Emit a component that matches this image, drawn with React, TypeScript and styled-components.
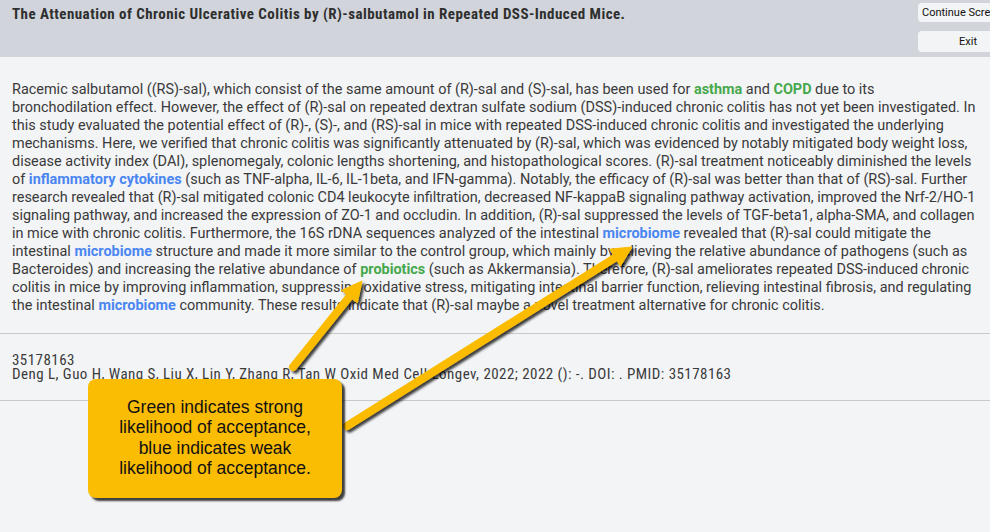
import styled, { createGlobalStyle } from "styled-components";

const GlobalStyle = createGlobalStyle`
  html, body {
    margin: 0;
    padding: 0;
    background: #f3f4f6;
    overflow: hidden;
  }
  body {
    font-family: Roboto, "Liberation Sans", sans-serif;
    color: #3a3a3a;
  }
`;

const condensed = `"Roboto Condensed", "Liberation Sans Narrow", "DejaVu Sans Condensed", Roboto, sans-serif`;

// --- HEADER ---
const Header = styled.header`
  display: grid;
  grid-template-columns: 906px 100px;
  column-gap: 12px;
  height: 57px;
  background: #d1d5db;
`;

const Title = styled.h1`
  margin: 0;
  padding: 6px 0 0 12px;
  font-family: ${condensed};
  font-size: 15px;
  letter-spacing: 0.45px;
  font-weight: 700;
  line-height: 16px;
  color: #2f2f2f;
`;

const ButtonStack = styled.div`
  display: flex;
  flex-direction: column;
  gap: 9px;
  padding-top: 3px;
`;

const HeaderButton = styled.button<{ $align?: "left" | "center" }>`
  height: 19px;
  width: 100px;
  padding: 0 4px;
  border: none;
  border-radius: 4px;
  background: #f3f4f6;
  font-family: Roboto, sans-serif;
  font-size: 11px;
  color: #111;
  white-space: nowrap;
  text-align: ${(p) => p.$align ?? "center"};
  overflow: hidden;
  &:nth-child(2) {
    height: 21px;
  }
`;

// --- ABSTRACT ---
const Abstract = styled.p`
  margin: 0;
  padding: 24px 2px 18px 12px;
  font-size: 14.45px;
  line-height: 18px;
  white-space: nowrap;
  border-bottom: 1px solid #c9c9c9;
`;

const Term = styled.span<{ $strength: "strong" | "weak" }>`
  font-weight: 700;
  color: ${(p) => (p.$strength === "strong" ? "#46a84c" : "#4a86f2")};
`;

const Citation = styled.div`
  padding: 19px 12px 19px;
  font-family: ${condensed};
  font-size: 15px;
  letter-spacing: 0.45px;
  line-height: 14px;
  color: #3a3a3a;
  border-bottom: 1px solid #c9c9c9;
`;

// --- CALLOUT OVERLAY ---
const Overlay = styled.svg`
  position: absolute;
  left: 0;
  top: 0;
  pointer-events: none;
  overflow: visible;
`;

const Callout = styled.div`
  position: absolute;
  left: 88px;
  top: 379px;
  width: 254px;
  height: 119px;
  box-sizing: border-box;
  display: flex;
  align-items: center;
  justify-content: center;
  padding: 0 4px 2px;
  background: #fbbc04;
  border-radius: 8px;
  box-shadow: 3px 3px 2px rgba(0, 0, 0, 0.75);
  font-family: "Liberation Sans", Arial, sans-serif;
  font-size: 17.5px;
  line-height: 20.5px;
  text-align: center;
  color: #111;
`;

const Page = styled.div`
  position: relative;
  width: 990px;
  height: 532px;
  overflow: hidden;
`;

type Arrow = { x1: number; y1: number; x2: number; y2: number };

const arrows: Arrow[] = [
  { x1: 293, y1: 367, x2: 362, y2: 281 },
  { x1: 347, y1: 426, x2: 632, y2: 247 },
];

function arrowShape({ x1, y1, x2, y2 }: Arrow) {
  const len = Math.hypot(x2 - x1, y2 - y1);
  const ux = (x2 - x1) / len;
  const uy = (y2 - y1) / len;
  const headLen = 20;
  const headHalf = 10;
  const bx = x2 - ux * headLen;
  const by = y2 - uy * headLen;
  const px = -uy;
  const py = ux;
  const head = [
    [x2, y2],
    [bx + px * headHalf, by + py * headHalf],
    [bx - px * headHalf, by - py * headHalf],
  ]
    .map((p) => p.join(","))
    .join(" ");
  return { bx: bx + ux * 2, by: by + uy * 2, head };
}

const App = () => {
  return (
    <Page>
      <GlobalStyle />
      <Header>
        <Title>
          The Attenuation of Chronic Ulcerative Colitis by (R)-salbutamol in
          Repeated DSS-Induced Mice.
        </Title>
        <ButtonStack>
          <HeaderButton $align="left">Continue Screening</HeaderButton>
          <HeaderButton>Exit</HeaderButton>
        </ButtonStack>
      </Header>

      {/* line breaks follow the screening view's wrap */}
      <Abstract>
        Racemic salbutamol ((RS)-sal), which consist of the same amount of
        (R)-sal and (S)-sal, has been used for{" "}
        <Term $strength="strong">asthma</Term> and{" "}
        <Term $strength="strong">COPD</Term> due to its
        <br />
        bronchodilation effect. However, the effect of (R)-sal on repeated
        dextran sulfate sodium (DSS)-induced chronic colitis has not yet been
        investigated. In
        <br />
        this study evaluated the potential effect of (R)-, (S)-, and (RS)-sal in
        mice with repeated DSS-induced chronic colitis and investigated the
        underlying
        <br />
        mechanisms. Here, we verified that chronic colitis was significantly
        attenuated by (R)-sal, which was evidenced by notably mitigated body
        weight loss,
        <br />
        disease activity index (DAI), splenomegaly, colonic lengths shortening,
        and histopathological scores. (R)-sal treatment noticeably diminished
        the levels
        <br />
        of <Term $strength="weak">inflammatory cytokines</Term> (such as
        TNF-alpha, IL-6, IL-1beta, and IFN-gamma). Notably, the efficacy of
        (R)-sal was better than that of (RS)-sal. Further
        <br />
        research revealed that (R)-sal mitigated colonic CD4 leukocyte
        infiltration, decreased NF-kappaB signaling pathway activation, improved
        the Nrf-2/HO-1
        <br />
        signaling pathway, and increased the expression of ZO-1 and occludin.
        In addition, (R)-sal suppressed the levels of TGF-beta1, alpha-SMA, and
        collagen
        <br />
        in mice with chronic colitis. Furthermore, the 16S rDNA sequences
        analyzed of the intestinal <Term $strength="weak">microbiome</Term>{" "}
        revealed that (R)-sal could mitigate the
        <br />
        intestinal <Term $strength="weak">microbiome</Term> structure and made
        it more similar to the control group, which mainly by relieving the
        relative abundance of pathogens (such as
        <br />
        Bacteroides) and increasing the relative abundance of{" "}
        <Term $strength="strong">probiotics</Term> (such as Akkermansia).
        Therefore, (R)-sal ameliorates repeated DSS-induced chronic
        <br />
        colitis in mice by improving inflammation, suppressing oxidative
        stress, mitigating intestinal barrier function, relieving intestinal
        fibrosis, and regulating
        <br />
        the intestinal <Term $strength="weak">microbiome</Term> community.
        These results indicate that (R)-sal maybe a novel treatment alternative
        for chronic colitis.
      </Abstract>

      <Citation>
        35178163
        <br />
        Deng L, Guo H, Wang S, Liu X, Lin Y, Zhang R, Tan W Oxid Med Cell
        Longev, 2022; 2022 (): -. DOI: . PMID: 35178163
      </Citation>

      <Overlay width="990" height="532" viewBox="0 0 990 532">
        <defs>
          <filter id="arrowShadow" x="-20%" y="-20%" width="140%" height="140%">
            <feDropShadow dx="2.5" dy="2.5" stdDeviation="1.2" floodColor="#000" floodOpacity="0.75" />
          </filter>
        </defs>
        {arrows.map((a, i) => {
          const s = arrowShape(a);
          return (
            <g key={i} filter="url(#arrowShadow)" fill="#fbbc04" stroke="#fbbc04">
              <line
                x1={a.x1}
                y1={a.y1}
                x2={s.bx}
                y2={s.by}
                strokeWidth={8}
                strokeLinecap="round"
              />
              <polygon points={s.head} strokeWidth={1} strokeLinejoin="round" />
            </g>
          );
        })}
      </Overlay>

      <Callout>
        Green indicates strong
        <br />
        likelihood of acceptance,
        <br />
        blue indicates weak
        <br />
        likelihood of acceptance.
      </Callout>
    </Page>
  );
};

export default App;
